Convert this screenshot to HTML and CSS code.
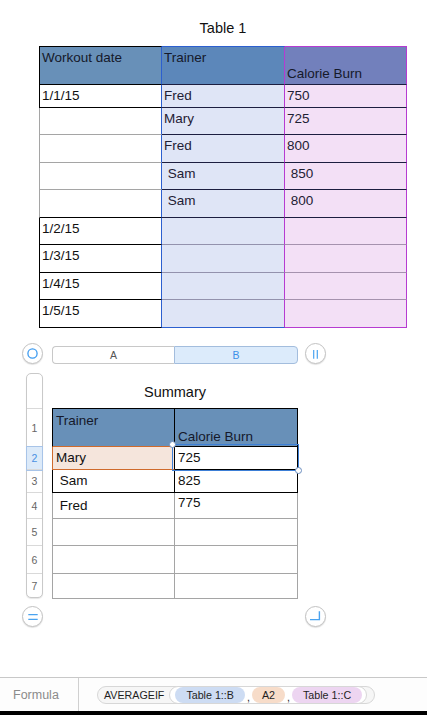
FILE: index.html
```html
<!DOCTYPE html>
<html>
<head>
<meta charset="utf-8">
<title>Sheet</title>
<link rel="stylesheet" href="styles.css">
</head>
<body>
<div class="page">
  <section class="sheet1">
    <div class="title">Table 1</div>
    <div class="grid t1">
      <div class="row hdr h39">
        <div class="cell ca">Workout date</div>
        <div class="cell cb">Trainer</div>
        <div class="cell cc">
Calorie Burn</div>
      </div>
      <div class="row h23">
        <div class="cell ca">1/1/15</div>
        <div class="cell cb">Fred</div>
        <div class="cell cc">750</div>
      </div>
      <div class="row soft h27">
        <div class="cell ca"></div>
        <div class="cell cb">Mary</div>
        <div class="cell cc">725</div>
      </div>
      <div class="row soft h28">
        <div class="cell ca"></div>
        <div class="cell cb">Fred</div>
        <div class="cell cc">800</div>
      </div>
      <div class="row soft h27">
        <div class="cell ca"></div>
        <div class="cell cb"> Sam</div>
        <div class="cell cc"> 850</div>
      </div>
      <div class="row softl h28">
        <div class="cell ca"></div>
        <div class="cell cb"> Sam</div>
        <div class="cell cc"> 800</div>
      </div>
      <div class="row lite h27">
        <div class="cell ca">1/2/15</div>
        <div class="cell cb"></div>
        <div class="cell cc"></div>
      </div>
      <div class="row lite h28">
        <div class="cell ca">1/3/15</div>
        <div class="cell cb"></div>
        <div class="cell cc"></div>
      </div>
      <div class="row lite h27">
        <div class="cell ca">1/4/15</div>
        <div class="cell cb"></div>
        <div class="cell cc"></div>
      </div>
      <div class="row last h28">
        <div class="cell ca">1/5/15</div>
        <div class="cell cb"></div>
        <div class="cell cc"></div>
      </div>
    </div>
  </section>

  <div class="ctrl-row top-ctrl">
    <div class="cbtn">
      <svg width="21" height="21" viewBox="0 0 21 21"><circle cx="10.5" cy="10.5" r="4.6" fill="none" stroke="#3d9bf0" stroke-width="1.3"/></svg>
    </div>
    <div class="colbar">
      <div class="colA">A</div>
      <div class="colB">B</div>
    </div>
    <div class="cbtn">
      <svg width="21" height="21" viewBox="0 0 21 21"><path d="M8.7 7 V15.8 M12.3 7 V15.8" stroke="#4aa3f0" stroke-width="1.2" fill="none"/></svg>
    </div>
  </div>

  <div class="summary-area">
    <div class="rowhdr">
      <div class="rh r35"></div>
      <div class="rh r38">1</div>
      <div class="rh r23 on">2</div>
      <div class="rh r23">3</div>
      <div class="rh r26">4</div>
      <div class="rh r27">5</div>
      <div class="rh r28">6</div>
      <div class="rh r23 end">7</div>
    </div>
    <section class="sheet2">
      <div class="title title2">Summary</div>
      <div class="t2wrap">
        <div class="grid t2">
          <div class="row hdr h39">
            <div class="cell ca">Trainer</div>
            <div class="cell cb">
Calorie Burn</div>
          </div>
          <div class="row pick h23">
            <div class="cell ca">Mary</div>
            <div class="cell cb">725</div>
          </div>
          <div class="row dark h23">
            <div class="cell ca"> Sam</div>
            <div class="cell cb">825</div>
          </div>
          <div class="row fred h26">
            <div class="cell ca"> Fred</div>
            <div class="cell cb">775</div>
          </div>
          <div class="row h27">
            <div class="cell ca"></div>
            <div class="cell cb"></div>
          </div>
          <div class="row h28">
            <div class="cell ca"></div>
            <div class="cell cb"></div>
          </div>
          <div class="row h25">
            <div class="cell ca"></div>
            <div class="cell cb"></div>
          </div>
        </div>
        <div class="sel"></div>
        <div class="handle h-tl"></div>
        <div class="handle h-br"></div>
      </div>
    </section>
  </div>

  <div class="ctrl-row bottom-ctrl">
    <div class="cbtn">
      <svg width="21" height="21" viewBox="0 0 21 21"><path d="M6.3 8.7 H15.7 M6.3 13.3 H15.7" stroke="#4aa3f0" stroke-width="1.2" fill="none"/></svg>
    </div>
    <div class="cbtn cbtn-right">
      <svg width="21" height="21" viewBox="0 0 21 21"><path d="M5 13.6 H14.4 V5.3" stroke="#4aa3f0" stroke-width="1.4" fill="none"/></svg>
    </div>
  </div>

  <div class="spacer"></div>

  <div class="fbar">
    <div class="flabel">Formula</div>
    <div class="fexpr">
      <span class="fn">
        <span class="fname">AVERAGEIF</span>
        <span class="args">
          <span class="pill pb">Table 1::B</span>
          <span class="comma">,</span>
          <span class="pill po">A2</span>
          <span class="comma">,</span>
          <span class="pill pp">Table 1::C</span>
        </span>
      </span>
    </div>
  </div>
  <div class="kb"></div>
</div>
</body>
</html>
```

FILE: styles.css
```css
* { box-sizing: border-box; }
html, body { margin: 0; padding: 0; }
body {
  width: 427px;
  height: 715px;
  overflow: hidden;
  background: #fff;
  font-family: "Liberation Sans", Arial, Helvetica, sans-serif;
  color: #111;
}
.page {
  display: flex;
  flex-direction: column;
  height: 715px;
}

/* titles */
.title {
  text-align: center;
  font-size: 14.5px;
  line-height: 18px;
  margin-bottom: 9px;
  color: #111;
}
.title2 { margin-bottom: 7px; }

/* generic grid */
.grid {
  display: flex;
  flex-direction: column;
  font-size: 13.5px;
  line-height: 16px;
}
.row { display: flex; }
.cell {
  border-right: 1px solid #000;
  border-bottom: 1px solid #000;
  padding: 3px 2px 0;
  white-space: pre;
  overflow: hidden;
}
.h39 { height: 39px; }
.h28 { height: 28px; }
.h27 { height: 27px; }
.h26 { height: 26px; }
.h25 { height: 25px; }
.h23 { height: 23px; }

/* Table 1 */
.sheet1 {
  margin-left: 39px;
  width: 368px;
  padding-top: 19px;
}
.t1 .ca {
  width: 123px;
  border-left: 1px solid #000;
  border-right-color: #2c5fcf;
}
.t1 .cb {
  width: 123px;
  background: #dfe5f6;
  border-right-color: #b63bd1;
  border-bottom-color: #1c1e40;
  color: #1e2034;
}
.t1 .cc {
  width: 122px;
  background: #f3e0f6;
  border-right-color: #b63bd1;
  border-bottom-color: #1c1e40;
  color: #1e2034;
}
.t1 .hdr .cell { border-top: 1px solid #000; color: #15192a; }
.t1 .hdr .ca { background: #6890b8; border-top-color: #000; }
.t1 .hdr .cb { background: #5c87ba; border-top-color: #2c5fcf; }
.t1 .hdr .cc { background: #7280bc; border-top-color: #b63bd1; }
.t1 .soft .ca { border-left-color: #a5a5a5; border-bottom-color: #a5a5a5; }
.t1 .softl .ca { border-left-color: #a5a5a5; }
.t1 .lite .cb { border-bottom-color: #9392ad; }
.t1 .lite .cc { border-bottom-color: #a592ae; }
.t1 .last .cb { border-bottom-color: #2c5fcf; }
.t1 .last .cc { border-bottom-color: #b63bd1; }

/* control rows */
.ctrl-row {
  display: flex;
  align-items: flex-start;
  padding-left: 22px;
}
.top-ctrl { margin-top: 15px; height: 22px; }
.bottom-ctrl { margin-top: 7px; height: 22px; }
.cbtn {
  width: 21px;
  height: 21px;
  border-radius: 50%;
  border: 1px solid #c3c3c3;
  background: #fff;
  box-shadow: 0 1px 1px rgba(0, 0, 0, 0.12);
  position: relative;
  flex: none;
}
.cbtn svg {
  position: absolute;
  left: -1px;
  top: -1px;
}
.cbtn-right { margin-left: 262px; }

.colbar {
  display: flex;
  width: 246px;
  height: 18px;
  margin: 3px 7px 0 9px;
  font-size: 10.5px;
  line-height: 16px;
}
.colA {
  width: 122px;
  border: 1px solid #c8c8c8;
  border-right: none;
  border-radius: 4px 0 0 4px;
  background: #fff;
  color: #555;
  text-align: center;
}
.colB {
  width: 124px;
  border: 1px solid #a3bddd;
  border-radius: 0 4px 4px 0;
  background: #dcebfb;
  color: #3d8fe8;
  text-align: center;
}

/* summary area */
.summary-area {
  display: flex;
  align-items: flex-start;
  margin-top: 8px;
  padding-left: 26px;
}
.rowhdr {
  width: 17px;
  margin-right: 9px;
  border: 1px solid #c9c9c9;
  border-radius: 5px;
  box-shadow: 0 1px 1px rgba(0, 0, 0, 0.1);
  background: #fff;
  flex: none;
}
.rh {
  border-bottom: 1px solid #d9d9d9;
  display: flex;
  align-items: center;
  justify-content: center;
  font-size: 10.5px;
  color: #666;
}
.rh.end { border-bottom: none; }
.rh.on {
  background: #dceaf9;
  color: #4a90e2;
  box-shadow: 0 0 0 1px #a8c4e8;
  position: relative;
}
.r35 { height: 35px; border-radius: 4px 4px 0 0; }
.r38 { height: 38px; }
.r28 { height: 28px; }
.r27 { height: 27px; }
.r26 { height: 26px; }
.r23 { height: 23px; }

.sheet2 {
  width: 246px;
  padding-top: 10px;
}
.t2wrap { position: relative; }
.t2 .cell { padding-left: 3px; }
.t2 .ca {
  width: 123px;
  border-left: 1px solid #a5a5a5;
  border-right-color: #a5a5a5;
  border-bottom-color: #a5a5a5;
}
.t2 .cb {
  width: 123px;
  border-right-color: #a5a5a5;
  border-bottom-color: #a5a5a5;
}
.t2 .hdr .cell {
  background: #6890b8;
  border-top: 1px solid #000;
  border-right-color: #000;
  border-bottom-color: #000;
  padding-top: 4px;
  color: #15192a;
}
.t2 .hdr .ca { border-left-color: #000; border-bottom-color: #cf6a2c; }
.t2 .pick .ca {
  background: #f5e5dc;
  border-left-color: #cf6a2c;
  border-bottom-color: #cf6a2c;
  border-right-color: #000;
}
.t2 .pick .cb { border-right-color: #000; border-bottom-color: #000; }
.t2 .dark .ca { border-left-color: #000; border-right-color: #000; border-bottom-color: #000; }
.t2 .dark .cb { border-right-color: #000; border-bottom-color: #000; }
.t2 .fred .ca { padding-top: 5px; }
.t2 .fred .cb { padding-top: 2px; }

.sel {
  position: absolute;
  left: 120px;
  top: 36px;
  width: 127px;
  height: 27px;
  border: 1px solid #3d7fd6;
}
.handle {
  position: absolute;
  width: 7px;
  height: 7px;
  border-radius: 50%;
  border: 1px solid #6c8ebf;
  background: #fff;
}
.h-tl { left: 117px; top: 33px; }
.h-br { left: 243px; top: 59px; }

/* formula bar */
.spacer { flex: 1; }
.fbar {
  flex: none;
  height: 34px;
  border-top: 1px solid #c8c8c8;
  display: flex;
  align-items: stretch;
  background: #fdfdfd;
}
.flabel {
  width: 79px;
  border-right: 1px solid #d0d0d0;
  display: flex;
  align-items: center;
  padding-left: 13px;
  font-size: 12.5px;
  color: #8b8b8b;
}
.fexpr {
  display: flex;
  align-items: center;
  padding-left: 18px;
}
.fn {
  display: flex;
  align-items: center;
  height: 18px;
  border: 1px solid #d7d7d7;
  border-radius: 9px;
  background: #f6f6f6;
  padding-left: 6px;
  padding-right: 7px;
  font-size: 10.7px;
  color: #1e1e1e;
}
.fname { margin-right: 5px; }
.args {
  display: flex;
  align-items: center;
  height: 18px;
  margin: -1px 0;
  border: 1px solid #d7d7d7;
  border-radius: 9px;
  background: #fff;
  padding: 0 4px 0 5px;
}
.pill {
  height: 16px;
  line-height: 16px;
  border-radius: 8px;
  padding: 0 11px;
  white-space: nowrap;
}
.pb { background: #cddcf3; }
.po { background: #f7dcc9; padding: 0 10px; }
.pp { background: #edd5f1; }
.comma {
  width: 7px;
  text-align: center;
  line-height: 16px;
  position: relative;
  top: 2px;
}
.kb {
  flex: none;
  height: 4px;
  background: #000;
}
```
